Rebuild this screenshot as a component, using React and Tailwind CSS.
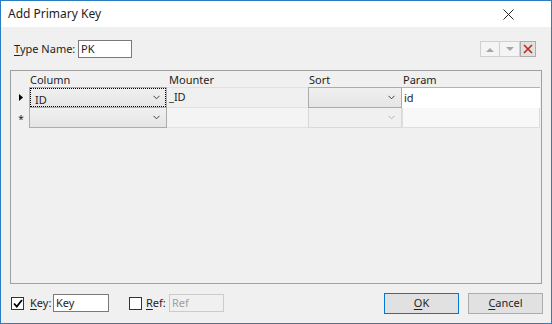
import React from "react";

const Chevron = ({ light }) => (
  <svg width="7" height="5" viewBox="0 0 7 5" className="shrink-0">
    <path d="M0.5 0.8 L3.5 3.8 L6.5 0.8" fill="none" stroke={light ? "#b5b5b5" : "#404040"} strokeWidth="1" />
  </svg>
);

const Combo = ({ text, width, focus, disabled, row2 }) => (
  <div
    className={`${width} h-full flex items-center justify-between pl-[5px] pr-[6px] border ${row2 ? "border-t-0" : ""} ${
      disabled ? "border-[#d9d9d9] bg-[#f0f0f0]" : "border-[#acacac] bg-gradient-to-b from-[#f0f0f0] to-[#e5e5e5]"
    } ${focus ? "outline outline-1 outline-dotted outline-black -outline-offset-2" : ""}`}
  >
    <span className="leading-none pt-[3px]">{text}</span>
    <Chevron light={disabled} />
  </div>
);

export default function App() {
  return (
    <div className="w-[552px] h-[324px] border border-[#2b7cc0] bg-[#f0f0f0] flex flex-col font-['Noto_Sans',sans-serif] text-[11px] text-[#1e1e1e] overflow-hidden whitespace-nowrap">
      {/* title bar */}
      <div className="h-[26px] bg-white flex items-center justify-between pl-[7px] pr-[37px]">
        <span className="text-[12px]">Add Primary Key</span>
        <svg width="11" height="11" viewBox="0 0 11 11">
          <path d="M0.5 0.5 L10.5 10.5 M10.5 0.5 L0.5 10.5" stroke="#222" strokeWidth="1" />
        </svg>
      </div>

      <div className="flex-1 flex flex-col px-[9px]">
        {/* type name row */}
        <div className="mt-[13px] h-[18px] flex items-center">
          <span className="ml-[4px] w-[64px] shrink-0">
            <span className="underline underline-offset-2">T</span>ype Name:
          </span>
          <div className="w-[54px] h-[18px] border border-[#7a7a7a] bg-white flex items-center pl-[2px]">PK</div>
          <div className="flex-1" />
          <div className="flex h-[16px] mr-[6px]">
            <div className="w-[20px] h-full border border-[#d0d0d0] bg-[#f4f4f4] flex items-center justify-center">
              <svg width="8" height="5" viewBox="0 0 8 5"><path d="M0 5 L4 1 L8 5 Z" fill="#a6a6a6" /></svg>
            </div>
            <div className="w-[20px] h-full border border-l-0 border-[#d0d0d0] bg-[#f4f4f4] flex items-center justify-center">
              <svg width="8" height="5" viewBox="0 0 8 5"><path d="M0 0 L4 4 L8 0 Z" fill="#a6a6a6" /></svg>
            </div>
            <div className="w-[16px] h-full border border-[#adadad] bg-[#e1e1e1] flex items-center justify-center">
              <svg width="10" height="10" viewBox="0 0 10 10">
                <path d="M1 1 L9 9 M9 1 L1 9" stroke="#c0281e" strokeWidth="1.6" />
              </svg>
            </div>
          </div>
        </div>

        {/* grid */}
        <div className="mt-[12px] h-[214px] border border-[#a0a0a0] bg-[#f0f0f0] flex flex-col">
          <div className="h-[16px] flex items-center leading-none pt-[1px]">
            <div className="w-[18px]" />
            <div className="w-[138px] pl-[1px]">Column</div>
            <div className="w-[141px] pl-[2px]">Mounter</div>
            <div className="w-[94px] pl-[1px]">Sort</div>
            <div className="w-[138px] pl-[1px]">Param</div>
          </div>
          <div className="h-[21px] flex">
            <div className="w-[18px] flex items-center justify-center pl-[2px]">
              <svg width="4" height="7" viewBox="0 0 4 7"><path d="M0 0 L4 3.5 L0 7 Z" fill="#000" /></svg>
            </div>
            <Combo text="ID" width="w-[138px]" focus />
            <div className="w-[141px] h-full border-y border-[#e2e2e2] bg-[#f0f0f0] flex items-start pl-[2px] pt-[1px]">_ID</div>
            <Combo text="" width="w-[94px]" />
            <div className="w-[138px] h-full border-t border-[#b4b4b4] bg-white flex items-center pl-[2px]">id</div>
          </div>
          <div className="h-[20px] flex">
            <div className="w-[18px] flex items-center justify-center pl-[2px] pt-[3px] text-[10px]">*</div>
            <Combo text="" width="w-[138px]" row2 />
            <div className="w-[141px] h-full border-b border-[#e2e2e2] bg-[#f4f4f4]" />
            <Combo text="" width="w-[94px]" disabled row2 />
            <div className="w-[138px] h-full border border-t-0 border-[#dedede] bg-[#f8f8f8]" />
          </div>
        </div>

        {/* bottom row */}
        <div className="mt-[8px] h-[22px] flex items-center">
          <div className="ml-[1px] w-[13px] h-[13px] border border-[#333] bg-white flex items-center justify-center shrink-0">
            <svg width="10" height="9" viewBox="0 0 10 9"><path d="M1 4.5 L3.8 7.5 L9 1" fill="none" stroke="#000" strokeWidth="1.8" /></svg>
          </div>
          <span className="ml-[6px] w-[23px] shrink-0">
            <span className="underline underline-offset-2">K</span>ey:
          </span>
          <div className="w-[56px] h-[18px] border border-[#7a7a7a] bg-white flex items-center pl-[2px]">Key</div>
          <div className="ml-[20px] w-[13px] h-[13px] border border-[#333] bg-white shrink-0" />
          <span className="ml-[4px] w-[23px] shrink-0">
            <span className="underline underline-offset-2">R</span>ef:
          </span>
          <div className="w-[55px] h-[18px] border border-[#cccccc] bg-[#f0f0f0] flex items-center pl-[2px] text-[#a0a0a0]">Ref</div>
          <div className="flex-1" />
          <div className="w-[75px] h-[21px] border border-[#0078d7] bg-[#e1e1e1] flex items-center justify-center">
            <span><span className="underline underline-offset-2">O</span>K</span>
          </div>
          <div className="ml-[9px] w-[75px] h-[21px] border border-[#adadad] bg-[#e1e1e1] flex items-center justify-center -mr-[1px]">
            <span><span className="underline underline-offset-2">C</span>ancel</span>
          </div>
        </div>
      </div>
    </div>
  );
}
